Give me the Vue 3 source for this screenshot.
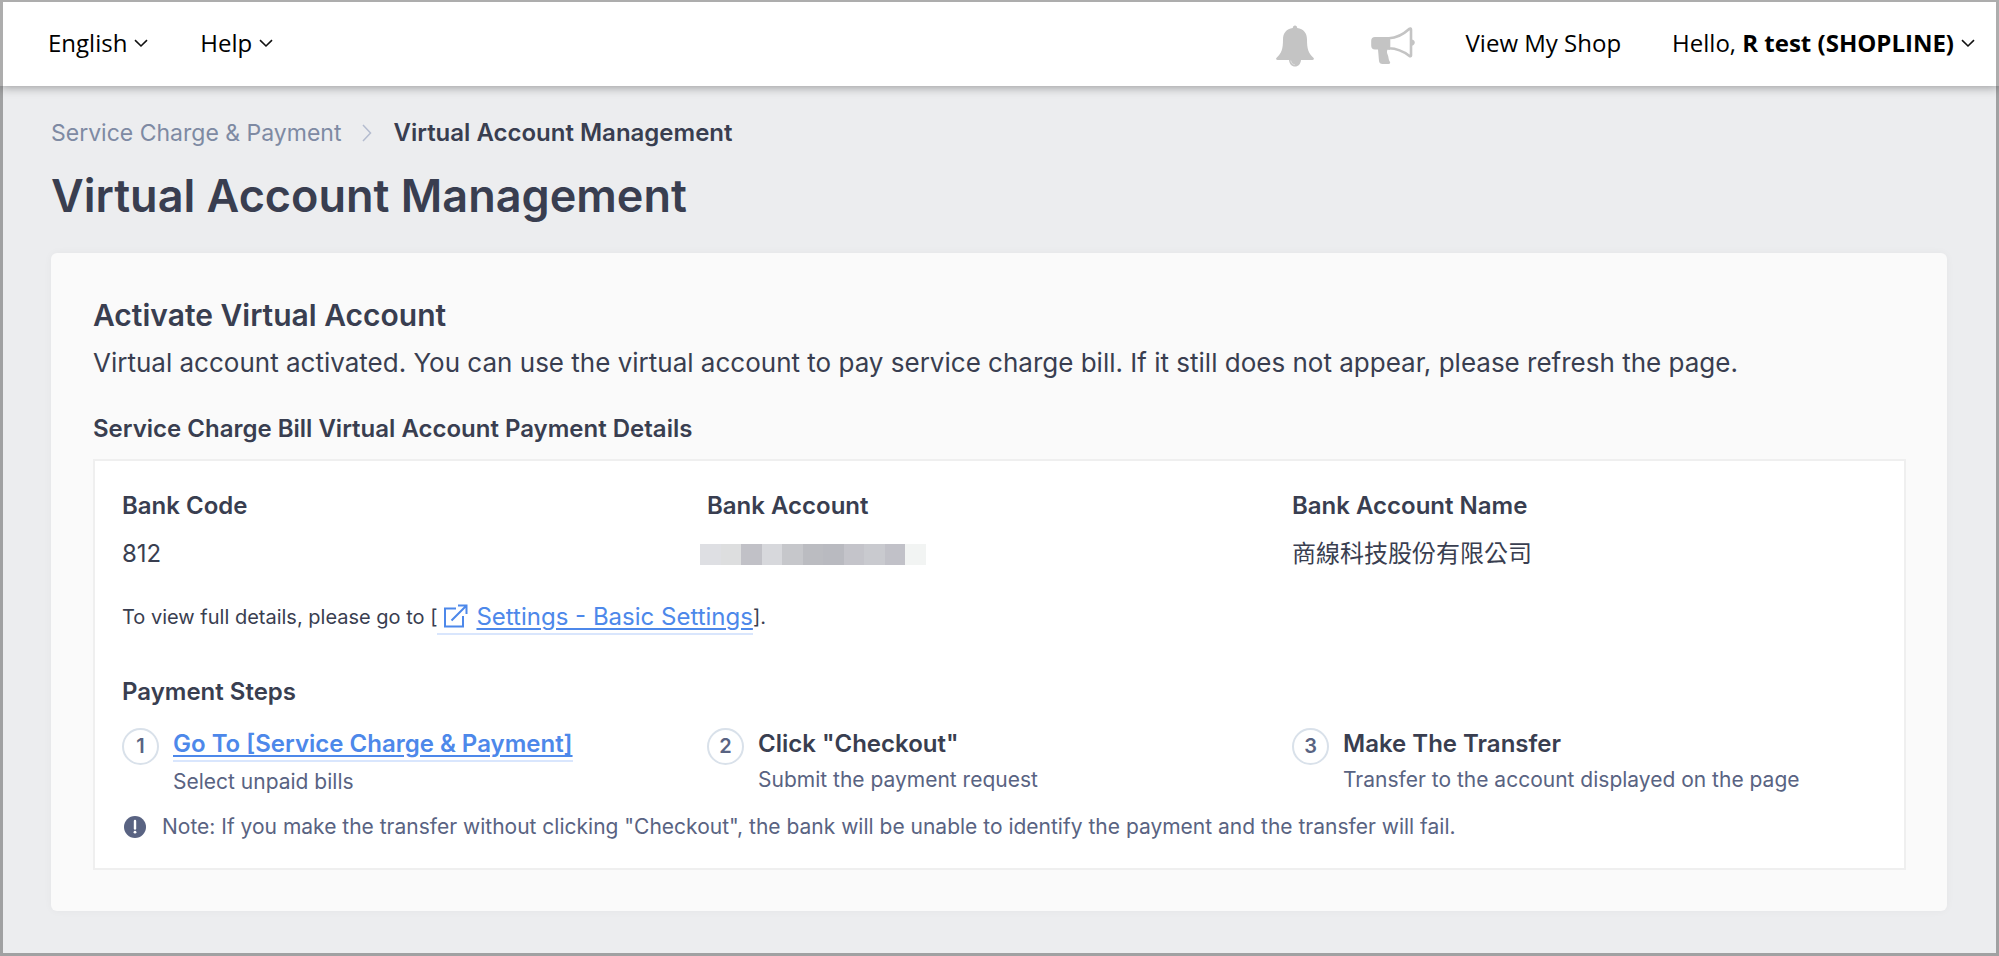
<template>
  <div class="page">
    <header class="top">
      <nav class="side">
        <button type="button" class="menu">
          English
          <svg class="chev" viewBox="0 0 14 9"><path d="M1 1.2l6 5.8 6-5.8" /></svg>
        </button>
        <button type="button" class="menu">
          Help
          <svg class="chev" viewBox="0 0 14 9"><path d="M1 1.2l6 5.8 6-5.8" /></svg>
        </button>
      </nav>
      <nav class="side right">
        <button type="button" class="ico" aria-label="Notifications">
          <svg width="38" height="42" viewBox="0 0 38 42">
            <path fill="#c4c4c4" d="M19 0.5c1.4 0 2.2 1 2.2 2.6C27.6 4 31 8.2 31 14.5c0 9.5 1.4 13.5 6.4 18.2.9.9.6 2.3-.9 2.3H1.500C0 35-.3 33.6.6 32.7 5.6 28 7 24 7 14.5 7 8.2 10.4 4 16.8 3.100c0-1.600.8-2.600 2.200-2.600z" />
            <path fill="#c4c4c4" d="M13 35h12c-.3 3.8-2.6 6.5-6 6.5s-5.700-2.700-6-6.500z" />
            <path fill="none" stroke="#dedede" stroke-width="1" d="M14.800 35.500c.3 2.500 1.800 4 4 4.200" />
          </svg>
        </button>
        <button type="button" class="ico" aria-label="Announcements">
          <svg width="44" height="38" viewBox="0 0 44 38">
            <path fill="#c4c4c4" d="M4 10h15v12.500h-2.500c-1 2.200-.4 3.800.3 5.500 1 2.500.5 4.500 2.200 7 .6 1-.2 2-1.500 2h-6c-2 0-3.300-1-3.500-3L7 22.500H4c-2.500 0-3.800-1.500-3.800-4v-4.500c0-2.500 1.300-4 3.800-4z" />
            <path fill="#fff" stroke="#c4c4c4" stroke-width="2.600" stroke-linejoin="round" d="M18 11.300c7.500-.3 14-3.600 20.500-9.500.6-.5 1.500-.3 1.500.6v26c0 .9-.9 1.100-1.500.6-6.500-5-13-7.500-20.500-7.700z" />
            <path fill="#c4c4c4" d="M16 10h3v12.500h-3zM41 12.500c1.700.3 2.800 1.500 2.800 3.100s-1.100 2.800-2.800 3.100z" />
          </svg>
        </button>
        <a href="#" class="shop">View My Shop</a>
        <button type="button" class="menu">
          <span>Hello, <b>{{ user }}</b></span>
          <svg class="chev" viewBox="0 0 14 9"><path d="M1 1.2l6 5.8 6-5.8" /></svg>
        </button>
      </nav>
    </header>

    <main>
      <nav class="crumbs">
        <a href="#">Service Charge &amp; Payment</a>
        <svg width="10" height="18" viewBox="0 0 10 18"><path d="M1 1l7.500 8L1 17" /></svg>
        <strong>Virtual Account Management</strong>
      </nav>
      <h1>Virtual Account Management</h1>

      <section class="card">
        <h2>Activate Virtual Account</h2>
        <p class="lead">Virtual account activated. You can use the virtual account to pay service charge bill. If it still does not appear, please refresh the page.</p>
        <h3>Service Charge Bill Virtual Account Payment Details</h3>

        <div class="box">
          <dl class="cols">
            <div>
              <dt>Bank Code</dt>
              <dd>812</dd>
            </div>
            <div>
              <dt>Bank Account</dt>
              <dd class="mask"><i v-for="(c, i) in mask" :key="i" :style="{ background: c }"></i></dd>
            </div>
            <div>
              <dt>Bank Account Name</dt>
              <dd>商線科技股份有限公司</dd>
            </div>
          </dl>

          <p class="more">
            <span>To view full details, please go to [</span>
            <a href="#" class="link">
              <svg width="25" height="24" viewBox="0 0 25 24"><path d="M13 4.500H2V22.500h18V12M8.500 16.500L23 2M15 1.500h8.500V10" /></svg>
              <span>Settings - Basic Settings</span>
            </a>
            <span>].</span>
          </p>

          <h3 class="sub">Payment Steps</h3>
          <ol class="cols steps">
            <li v-for="(s, i) in steps" :key="s.title">
              <span class="num">{{ i + 1 }}</span>
              <div>
                <h4><a v-if="s.link" href="#" class="go">{{ s.title }}</a><template v-else>{{ s.title }}</template></h4>
                <p>{{ s.text }}</p>
              </div>
            </li>
          </ol>

          <p class="note">
            <svg width="24" height="24" viewBox="0 0 24 24">
              <circle cx="12" cy="12" r="11" fill="#596382" />
              <path d="M12 6v7.500" stroke="#fff" stroke-width="2.400" stroke-linecap="round" />
              <circle cx="12" cy="17.200" r="1.400" fill="#fff" />
            </svg>
            <span>Note: If you make the transfer without clicking "Checkout", the bank will be unable to identify the payment and the transfer will fail.</span>
          </p>
        </div>
      </section>
    </main>
  </div>
</template>

<script setup>
import { ref } from 'vue'

const user = ref('R test (SHOPLINE)')

// account number is hidden behind grey blocks
const mask = ['#dedfe3', '#dddedf', '#c1c1c7', '#d7d8dc', '#c6c7cb', '#bbbcc1', '#b9bac0', '#c4c4ca', '#c9cacf', '#c1c1c8', '#f2f4f3']

const steps = [
  { title: 'Go To [Service Charge & Payment]', text: 'Select unpaid bills', link: true },
  { title: 'Click "Checkout"', text: 'Submit the payment request' },
  { title: 'Make The Transfer', text: 'Transfer to the account displayed on the page' }
]
</script>

<style>
body { margin: 0; background: #ecedef; }
</style>

<style scoped>
.page { position: relative; box-sizing: border-box; min-height: 100vh; background: #ecedef; color: #393e50; font-family: Inter, "Noto Sans CJK TC", sans-serif; font-size: 24px; line-height: 32px; }
.page::after { content: ""; position: absolute; inset: 0; border: 3px solid rgba(0, 0, 0, .32); border-top-width: 2px; pointer-events: none; }
h1, h2, h3, h4, p, dl, dd, ol { margin: 0; padding: 0; }
h1, h2, h3, h4, dt, strong { font-weight: 600; }
svg { flex: none; display: block; }
button { border: 0; padding: 0; background: none; font: inherit; color: inherit; cursor: pointer; }

.top { height: 86px; padding: 0 24px 0 48px; display: flex; align-items: center; justify-content: space-between; background: #fff; box-shadow: 0 1px 10px rgba(0, 0, 0, .38); color: #000; font-family: "Open Sans", sans-serif; }
.side { display: flex; align-items: center; gap: 52px; }
.right { gap: 51px; }
.menu { display: flex; align-items: center; gap: 7px; }
.chev { width: 14px; height: 9px; fill: none; stroke: #111; stroke-width: 1.6; }
.shop { color: inherit; text-decoration: none; }
.ico { width: 44px; padding-top: 6px; }

main { padding: 31px 52px 44px 51px; }
.crumbs { display: flex; align-items: center; gap: 21px; }
.crumbs a { color: #7e8aa3; font-size: 23px; text-decoration: none; }
.crumbs svg { fill: none; stroke: #b4bccf; stroke-width: 1.5; }
h1 { margin-top: 17px; font-size: 45px; line-height: 60px; }

.card { margin-top: 27px; padding: 42px 41px 41px 42px; background: #fafafa; border-radius: 6px; box-shadow: 0 0 8px rgba(0, 0, 0, .04); }
h2 { font-size: 30px; line-height: 40px; }
.lead { margin-top: 8px; font-size: 26px; line-height: 40px; }
h3 { margin-top: 30px; font-size: 24px; }
.box { margin-top: 14px; padding: 29px 27px 27px; background: #fff; border: 2px solid #efefef; }
.cols { display: grid; grid-template-columns: repeat(3, 1fr); }
dt { margin-bottom: 16px; }
dd { height: 32px; }
.mask { display: flex; align-items: center; width: 226px; margin-left: -7px; }
.mask i { flex: 1; height: 21px; }

.more { display: flex; height: 34px; margin-top: 31px; font-size: 20px; }
.link { display: flex; gap: 8px; padding-left: 6px; border-bottom: 2px solid #d9e6fd; color: #4d88ea; font-size: 24px; text-decoration: none; }
.link svg { margin-top: 3px; fill: none; stroke: currentColor; stroke-width: 2; }
.link span, .go { text-decoration: underline; text-underline-offset: 3px; }

.sub { margin-top: 41px; }
.steps { margin-top: 20px; list-style: none; }
.steps li { display: flex; gap: 14px; }
.num { box-sizing: border-box; width: 37px; height: 37px; border: 2px solid #d9e1ea; border-radius: 50%; font-size: 20px; font-weight: 600; line-height: 33px; text-align: center; color: #596382; }
h4 { font-size: 24px; }
.go { display: inline-block; border-bottom: 2px solid #d9e6fd; color: #4d88ea; vertical-align: top; }
.steps p, .note { margin-top: 6px; font-size: 21px; line-height: 28px; color: #596382; }
.note { display: flex; align-items: center; gap: 15px; margin-top: 17px; padding-left: 1px; }
</style>
